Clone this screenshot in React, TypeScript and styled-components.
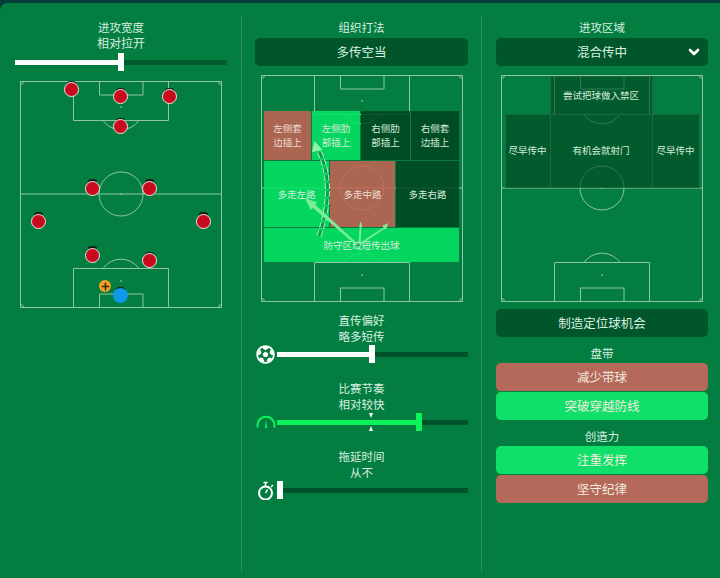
import * as React from 'react';
import styled, {createGlobalStyle} from 'styled-components';
import {FaFutbol} from 'react-icons/fa';
import {LuChevronDown, LuPlus} from 'react-icons/lu';

const GlobalStyle = createGlobalStyle`
    html, body {
        margin: 0;
        height: 100%;
        overflow: hidden;
        background: #043d3a;
    }
`

const Page = styled.div`
    box-sizing: border-box;
    width: 720px;
    height: 575px;
    margin-top: 3px;
    padding: 12px 0 6px;
    background: #037e40;
    border-radius: 8px 0 0 0;
    display: grid;
    grid-template-columns: 241px 240px 239px;
    font-family: "Noto Sans CJK SC", "Noto Sans", sans-serif;
    color: #d9efe1;
    text-align: center;
`

const Column = styled.div<{$first?: boolean; $pl: number; $pr: number}>`
    box-sizing: border-box;
    display: flex;
    flex-direction: column;
    padding: 4px ${p => p.$pr}px 0 ${p => p.$pl}px;
    border-left: ${p => p.$first ? 'none' : 'solid 1px #2f9462'};
`

const Label = styled.div<{$size?: number}>`
    font-size: ${p => p.$size || 11.5}px;
    line-height: 16px;
`

const Selector = styled.div`
    position: relative;
    height: 28px;
    margin-top: 3px;
    background: #00562a;
    border-radius: 5px;
    font-size: 12.5px;
    line-height: 27px;
`

const Chevron = styled(LuChevronDown)`
    position: absolute;
    right: 6px;
    top: 6px;
    color: #fff;
    stroke-width: 4px;
`

const PitchBox = styled.div<{$top: number; $left: number}>`
    position: relative;
    width: 202px;
    height: 227px;
    margin: ${p => p.$top}px 0 0 ${p => p.$left}px;
`

const PitchLines = styled.svg`
    display: block;
    fill: none;
    stroke: #8ec5a6;
    stroke-width: 1;
`

const Overlay = styled.svg`
    position: absolute;
    left: 0;
    top: 0;
`

const ZoneStack = styled.div`
    position: absolute;
    left: 3px;
    top: 36px;
    width: 195px;
    display: flex;
    flex-direction: column;
    gap: 1px;
`

const ZoneRow = styled.div<{$cols: string; $height: number}>`
    display: grid;
    grid-template-columns: ${p => p.$cols};
    gap: 1px;
    height: ${p => p.$height}px;
`

const ZoneGrid = styled.div`
    position: absolute;
    left: 4px;
    top: 1px;
    display: grid;
    grid-template-columns: 45px 102px 47px;
    grid-template-rows: 38px 73px;
`

const Zone = styled.div<{$kind: 'bright' | 'red' | 'dark' | 'plan' | 'blank'}>`
    display: flex;
    align-items: center;
    justify-content: center;
    padding-bottom: 1px;
    font-size: 9.5px;
    line-height: 14px;
    white-space: pre-line;
    color: ${p => p.$kind === 'red' ? '#ecdcd2' : '#d5ecd9'};
    border: ${p => p.$kind === 'plan' ? 'solid 0.5px #1c6a41' : 'none'};
    margin: ${p => p.$kind === 'plan' ? '-0.5px' : '0'};
    background: ${p => ({
        bright: 'rgba(5, 228, 100, 0.86)',
        red: 'rgba(199, 98, 85, 0.86)',
        dark: 'rgba(0, 71, 33, 0.88)',
        plan: 'rgba(0, 70, 34, 0.62)',
        blank: 'transparent',
    }[p.$kind])};
`

const Player = styled.div<{$keeper?: boolean}>`
    position: absolute;
    box-sizing: border-box;
    width: 15px;
    height: 15px;
    margin: -7.5px 0 0 -7.5px;
    border-radius: 50%;
    background: ${p => p.$keeper ? '#1098ea' : '#c8091e'};
    border: ${p => p.$keeper ? 'none' : 'solid 1.5px #ece9e4'};

    &::before {
        content: '';
        position: absolute;
        z-index: -1;
        left: ${p => p.$keeper ? 3 : 2}px;
        right: ${p => p.$keeper ? 3 : 2}px;
        top: ${p => p.$keeper ? -1 : -2.5}px;
        height: 4px;
        border-radius: 50%;
        background: #1a1a1a;
    }
`

const PlayerLayer = styled.div`
    position: absolute;
    inset: 0;
    z-index: 0;
`

const Plus = styled.div`
    position: absolute;
    left: 79px;
    top: 199px;
    width: 12px;
    height: 12px;
    border-radius: 50%;
    background: #f2a220;
    color: #3f2d12;
    display: flex;
    align-items: center;
    justify-content: center;
`

const SliderRow = styled.div<{$top?: number}>`
    display: flex;
    align-items: center;
    height: 18px;
    margin-top: ${p => p.$top || 0}px;
`

const IconSlot = styled.div`
    flex: none;
    box-sizing: border-box;
    width: 22px;
    height: 18px;
    padding-left: 1px;
    display: flex;
    align-items: center;
    color: #fff;
`

const Track = styled.div`
    position: relative;
    flex: 1;
    display: flex;
    align-items: center;
    height: 18px;
`

const Fill = styled.div<{$color: string}>`
    flex: none;
    height: 5px;
    background: ${p => p.$color};
`

const Thumb = styled.div<{$color: string}>`
    flex: none;
    width: 6px;
    height: 18px;
    background: ${p => p.$color};
`

const Rest = styled.div<{$color?: string}>`
    flex: 1;
    height: 5px;
    background: ${p => p.$color || '#00522a'};
`

const Marker = styled.div<{$down?: boolean}>`
    position: absolute;
    left: 92px;
    ${p => p.$down ? 'top: 0;' : 'bottom: 0;'}
    width: 0;
    height: 0;
    border-left: 2.5px solid transparent;
    border-right: 2.5px solid transparent;
    ${p => p.$down ? 'border-top: 5px solid #fff;' : 'border-bottom: 5px solid #fff;'}
`

const Setting = styled.div<{$top: number}>`
    margin-top: ${p => p.$top}px;
`

const Button = styled.div<{$kind: 'dark' | 'red' | 'green'; $top?: number}>`
    height: 28px;
    margin-top: ${p => p.$top || 0}px;
    border-radius: 5px;
    font-size: 12.5px;
    line-height: 27px;
    color: ${p => p.$kind === 'dark' ? '#d9efe1' : '#f0ecdf'};
    background: ${p => ({dark: '#00562a', red: '#b5695a', green: '#10e06a'}[p.$kind])};
`

const GroupLabel = styled(Label)`
    margin-top: 8px;
    height: 18px;
    line-height: 17px;
`

const Pitch = () => (
    <PitchLines width="202" height="227" viewBox="0 0 202 227">
        <rect x="0.5" y="0.5" width="201" height="226"/>
        <line x1="0.5" y1="113" x2="201.5" y2="113"/>
        <circle cx="101" cy="113" r="22"/>
        <path d="M53.5 0.5V39.5H148.5V0.5M79.5 0.5V14H123V0.5"/>
        <path d="M53.5 226.5V187.5H148.5V226.5M79.5 226.5V213H123V226.5"/>
        <path d="M83 39.5A22 22 0 0 0 119 39.5M83 187.5A22 22 0 0 1 119 187.5"/>
        <path d="M0.5 3.5A3 3 0 0 0 3.5 0.5M198.5 0.5A3 3 0 0 0 201.5 3.5M0.5 223.5A3 3 0 0 1 3.5 226.5M198.5 226.5A3 3 0 0 1 201.5 223.5"/>
        <circle cx="101" cy="26" r="0.5"/>
        <circle cx="101" cy="113" r="0.5"/>
        <circle cx="101" cy="200" r="0.5"/>
    </PitchLines>
);

const Arrows = () => (
    <Overlay width="202" height="227" viewBox="0 0 202 227">
        <path d="M58 161 Q75 112 58 76" fill="none" stroke="#a4f6bb" strokeWidth="5" strokeDasharray="6 2"/>
        <path d="M58 161 Q75 112 58 76" fill="none" stroke="#0f9a50" strokeWidth="3" strokeDasharray="6 2"/>
        <polygon points="53.5,66 51,77 61.5,75" fill="#8df3a9"/>
        <polygon points="44,123.3 49.7,135 51.8,132.7 96,171 97.5,169.5 54.3,129.7 56.3,127.5" fill="#7fee9c" opacity="0.95"/>
        <polygon points="99.7,146 98,152 98.6,152 97.5,170 99.5,170 100.4,152 101.4,152" fill="#7fee9c" opacity="0.95"/>
        <polygon points="127.3,148.3 121.5,150.5 122.7,152.2 97.5,169 98.5,170.5 123.8,153.6 124.8,155" fill="#7fee9c" opacity="0.95"/>
        <ellipse cx="97" cy="170" rx="2" ry="1.5" fill="#056b3a" opacity="0.6"/>
    </Overlay>
);

const GaugeIcon = () => (
    <svg width="20" height="16" viewBox="0 0 20 16" fill="none" stroke="#0cf25c">
        <path d="M1.8 13.5A8.5 8.5 0 1 1 18.2 13.5" strokeWidth="2"/>
        <polygon points="10,5.5 8.9,14 11.1,14" fill="#0cf25c" stroke="none"/>
    </svg>
);

const WatchIcon = () => (
    <svg width="20" height="20" viewBox="0 0 20 20" fill="none" stroke="#fff">
        <circle cx="9.5" cy="13" r="6.5" strokeWidth="2"/>
        <path d="M9.5 6.5V3M7.5 2.5H11.5" strokeWidth="1.5"/>
        <path d="M15 7L17 5" strokeWidth="1.5"/>
        <path d="M9.5 13L11.5 9.5" strokeWidth="1.5"/>
    </svg>
);

const players = [
    [51.5, 8.5], [100.5, 15.5], [149.5, 15.5], [100.5, 45.5],
    [72, 107], [129, 107], [18, 140], [183, 140], [72, 174], [129, 179.5],
];

const App = () => (
    <Page>
        <GlobalStyle/>
        <Column $first $pl={15} $pr={14}>
            <Label>进攻宽度</Label>
            <Label $size={12}>相对拉开</Label>
            <SliderRow $top={2}>
                <Track>
                    <Fill $color="#fff" style={{width: 103}}/>
                    <Thumb $color="#fff"/>
                    <Rest $color="#005c2e"/>
                </Track>
            </SliderRow>
            <PitchBox $top={10} $left={5}>
                <Pitch/>
                <PlayerLayer>
                    {players.map(([x, y]) => <Player key={`${x}-${y}`} style={{left: x, top: y}}/>)}
                    <Player $keeper style={{left: 100.5, top: 214.5}}/>
                    <Plus><LuPlus size={11} strokeWidth={3.5}/></Plus>
                </PlayerLayer>
            </PitchBox>
        </Column>
        <Column $pl={13} $pr={13}>
            <Label>组织打法</Label>
            <Selector>多传空当</Selector>
            <PitchBox $top={9} $left={6}>
                <Pitch/>
                <ZoneStack>
                    <ZoneRow $cols="47px 48px 49px 48px" $height={49}>
                        <Zone $kind="red">{'左侧套\n边插上'}</Zone>
                        <Zone $kind="bright">{'左侧肋\n部插上'}</Zone>
                        <Zone $kind="dark">{'右侧肋\n部插上'}</Zone>
                        <Zone $kind="dark">{'右侧套\n边插上'}</Zone>
                    </ZoneRow>
                    <ZoneRow $cols="65px 65px 63px" $height={66}>
                        <Zone $kind="bright">多走左路</Zone>
                        <Zone $kind="red">多走中路</Zone>
                        <Zone $kind="dark">多走右路</Zone>
                    </ZoneRow>
                    <ZoneRow $cols="195px" $height={34}>
                        <Zone $kind="bright">防守区域短传出球</Zone>
                    </ZoneRow>
                </ZoneStack>
                <Arrows/>
            </PitchBox>
            <Setting $top={10}>
                <Label>直传偏好</Label>
                <Label>略多短传</Label>
                <SliderRow $top={1}>
                    <IconSlot><FaFutbol size={19}/></IconSlot>
                    <Track>
                        <Fill $color="#fff" style={{width: 92}}/>
                        <Thumb $color="#fff"/>
                        <Rest/>
                    </Track>
                </SliderRow>
            </Setting>
            <Setting $top={17}>
                <Label>比赛节奏</Label>
                <Label>相对较快</Label>
                <SliderRow $top={1}>
                    <IconSlot><GaugeIcon/></IconSlot>
                    <Track>
                        <Fill $color="#0cf25c" style={{width: 139}}/>
                        <Thumb $color="#0cf25c"/>
                        <Rest/>
                        <Marker $down/>
                        <Marker/>
                    </Track>
                </SliderRow>
            </Setting>
            <Setting $top={17}>
                <Label>拖延时间</Label>
                <Label>从不</Label>
                <SliderRow $top={1}>
                    <IconSlot><WatchIcon/></IconSlot>
                    <Track>
                        <Fill $color="#fff" style={{width: 0}}/>
                        <Thumb $color="#fff"/>
                        <Rest/>
                    </Track>
                </SliderRow>
            </Setting>
        </Column>
        <Column $pl={14} $pr={12}>
            <Label>进攻区域</Label>
            <Selector>混合传中<Chevron size={16}/></Selector>
            <PitchBox $top={9} $left={5}>
                <Pitch/>
                <ZoneGrid>
                    <Zone $kind="blank"/>
                    <Zone $kind="plan">尝试把球做入禁区</Zone>
                    <Zone $kind="blank"/>
                    <Zone $kind="plan">尽早传中</Zone>
                    <Zone $kind="plan">有机会就射门</Zone>
                    <Zone $kind="plan">尽早传中</Zone>
                </ZoneGrid>
            </PitchBox>
            <Button $kind="dark" $top={7}>制造定位球机会</Button>
            <GroupLabel>盘带</GroupLabel>
            <Button $kind="red">减少带球</Button>
            <Button $kind="green" $top={1}>突破穿越防线</Button>
            <GroupLabel>创造力</GroupLabel>
            <Button $kind="green">注重发挥</Button>
            <Button $kind="red" $top={1}>坚守纪律</Button>
        </Column>
    </Page>
);

export default App;
